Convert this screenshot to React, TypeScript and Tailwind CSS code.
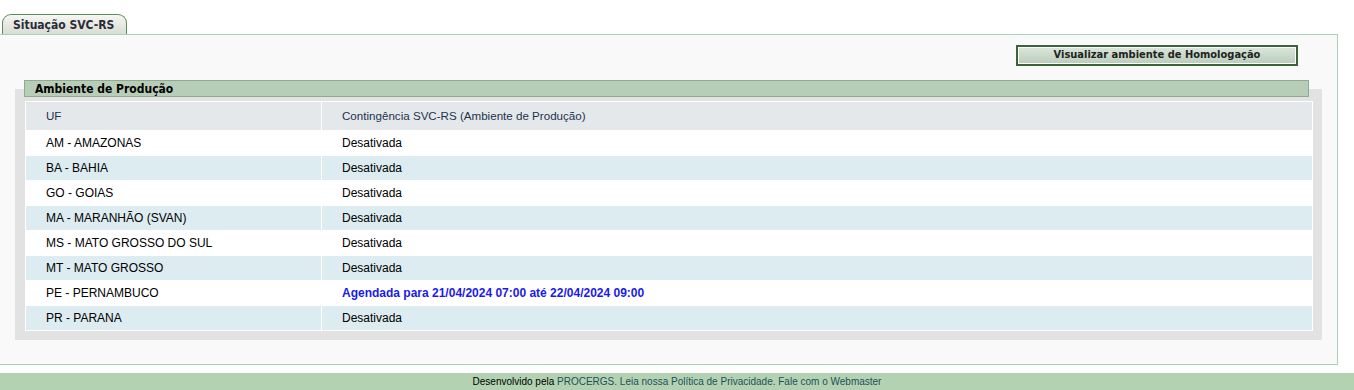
import React from "react";

const rows = [
  { uf: "AM - AMAZONAS", status: "Desativada" },
  { uf: "BA - BAHIA", status: "Desativada" },
  { uf: "GO - GOIAS", status: "Desativada" },
  { uf: "MA - MARANHÃO (SVAN)", status: "Desativada" },
  { uf: "MS - MATO GROSSO DO SUL", status: "Desativada" },
  { uf: "MT - MATO GROSSO", status: "Desativada" },
  { uf: "PE - PERNAMBUCO", status: "Agendada para 21/04/2024 07:00 até 22/04/2024 09:00", scheduled: true },
  { uf: "PR - PARANA", status: "Desativada" },
];

export default function App() {
  return (
    <div className="min-h-[390px] bg-white font-['DejaVu_Sans_Condensed','DejaVu_Sans',Tahoma,sans-serif]">
      <div className="mr-[16px] pt-[14px]">
        <div className="ml-[2px] flex">
          <div className="h-[20px] w-[125px] rounded-t-[9px] border border-b-0 border-[#5f8a5f] bg-gradient-to-b from-[#f6f6f2] to-[#d9ddd2] pl-[10px] text-[12px] font-bold leading-[20px] text-[#2b2b3b]">
            Situação SVC-RS
          </div>
        </div>
        <div className="border border-l-0 border-[#a9d3b9] bg-[#f9f9f9] pb-[24px] pt-[10px]">
          <div className="flex justify-end pr-[39px]">
            <button className="h-[21px] w-[282px] border-2 border-[#3b623b] bg-gradient-to-b from-[#dbe6db] to-[#b9cdb9] text-[11px] font-bold text-[#222] shadow-[inset_0_0_0_1px_#ffffff]">
              Visualizar ambiente de Homologação
            </button>
          </div>
          <div className="mx-[15px] mt-[14px]">
            <div className="relative z-10 ml-[9px] mr-[13px] h-[17px] border border-[#8eab8e] bg-[#b8cdb8] pl-[10px] text-[12px] font-bold leading-[16px] text-black">
              Ambiente de Produção
            </div>
            <div className="-mt-[8px] bg-[#e2e2e2] pb-[9px] pl-[10px] pr-[9px] pt-[12px]">
              <table className="w-full border-collapse font-['Liberation_Sans',Arial,sans-serif] text-[12px]">
                <thead>
                  <tr className="h-[29px] bg-[#e4e8ea] text-left text-[11.6px] text-[#1c3350]">
                    <th className="w-[296px] border border-white pl-[20px] font-normal">UF</th>
                    <th className="border border-white pl-[20px] font-normal">Contingência SVC-RS (Ambiente de Produção)</th>
                  </tr>
                </thead>
                <tbody>
                  {rows.map((r, i) => (
                    <tr key={r.uf} className={i % 2 === 0 ? "h-[25px] bg-white" : "h-[25px] bg-[#dcecf0]"}>
                      <td className="border border-white pl-[20px] text-black">{r.uf}</td>
                      <td className={r.scheduled ? "border border-white pl-[20px] font-bold text-[#1a1aee]" : "border border-white pl-[20px] text-black"}>
                        {r.status}
                      </td>
                    </tr>
                  ))}
                </tbody>
              </table>
            </div>
          </div>
        </div>
      </div>
      <div className="mt-[8px] h-[18px] bg-[#b2d2b2] text-center font-['Liberation_Sans',Arial,sans-serif] text-[10px] leading-[18px] text-[#1f4f5c]">
        <span className="text-black">Desenvolvido pela </span>
        PROCERGS. Leia nossa Política de Privacidade. Fale com o Webmaster
      </div>
    </div>
  );
}
